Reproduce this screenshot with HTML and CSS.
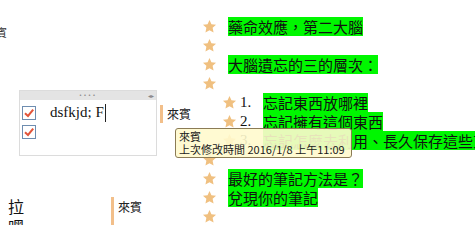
FILE: index.html
```html
<!DOCTYPE html>
<html>
<head>
<meta charset="utf-8">
<link rel="stylesheet" href="styles.css">
</head>
<body>
<div class="page">
  <div class="left">
    <div class="stub">賓</div>
    <div class="widget-row">
      <div class="widget">
        <div class="widget-head"><span class="dots">••••</span><span class="arrows">◂▸</span></div>
        <div class="widget-body">
          <div class="todo">
            <span class="cb"><svg viewBox="0 0 14 14" width="14" height="14"><path d="M3 7.2 L6 10 L11.2 3.6" fill="none" stroke="#e2553a" stroke-width="2"/></svg></span>
            <span class="todo-text">dsfkjd; F<span class="caret"></span></span>
          </div>
          <div class="todo">
            <span class="cb"><svg viewBox="0 0 14 14" width="14" height="14"><path d="M3 7.2 L6 10 L11.2 3.6" fill="none" stroke="#e2553a" stroke-width="2"/></svg></span>
          </div>
        </div>
      </div>
      <div class="author">來賓</div>
    </div>
    <div class="bottom-row">
      <div class="chars">拉<br>嘿</div>
      <div class="author author-low">來賓</div>
    </div>
  </div>
  <div class="right">
    <div class="row"><svg class="star" viewBox="0 0 24 24"><polygon points="12,1.5 15.1,8.3 22.5,9.1 17,14.1 18.5,21.5 12,17.8 5.5,21.5 7,14.1 1.5,9.1 8.9,8.3"/></svg><span class="hl">藥命效應，第二大腦</span></div>
    <div class="row"><svg class="star" viewBox="0 0 24 24"><polygon points="12,1.5 15.1,8.3 22.5,9.1 17,14.1 18.5,21.5 12,17.8 5.5,21.5 7,14.1 1.5,9.1 8.9,8.3"/></svg></div>
    <div class="row"><svg class="star" viewBox="0 0 24 24"><polygon points="12,1.5 15.1,8.3 22.5,9.1 17,14.1 18.5,21.5 12,17.8 5.5,21.5 7,14.1 1.5,9.1 8.9,8.3"/></svg><span class="hl">大腦遺忘的三的層次：</span></div>
    <div class="row"><svg class="star" viewBox="0 0 24 24"><polygon points="12,1.5 15.1,8.3 22.5,9.1 17,14.1 18.5,21.5 12,17.8 5.5,21.5 7,14.1 1.5,9.1 8.9,8.3"/></svg></div>
    <div class="row li"><svg class="star" viewBox="0 0 24 24"><polygon points="12,1.5 15.1,8.3 22.5,9.1 17,14.1 18.5,21.5 12,17.8 5.5,21.5 7,14.1 1.5,9.1 8.9,8.3"/></svg><span class="num">1.</span><span class="hl">忘記東西放哪裡</span></div>
    <div class="row li"><svg class="star" viewBox="0 0 24 24"><polygon points="12,1.5 15.1,8.3 22.5,9.1 17,14.1 18.5,21.5 12,17.8 5.5,21.5 7,14.1 1.5,9.1 8.9,8.3"/></svg><span class="num">2.</span><span class="hl">忘記擁有這個東西</span></div>
    <div class="row li"><svg class="star" viewBox="0 0 24 24"><polygon points="12,1.5 15.1,8.3 22.5,9.1 17,14.1 18.5,21.5 12,17.8 5.5,21.5 7,14.1 1.5,9.1 8.9,8.3"/></svg><span class="num">3.</span><span class="hl">忘記怎麼去利用、長久保存這些東西</span></div>
    <div class="row"><svg class="star" viewBox="0 0 24 24"><polygon points="12,1.5 15.1,8.3 22.5,9.1 17,14.1 18.5,21.5 12,17.8 5.5,21.5 7,14.1 1.5,9.1 8.9,8.3"/></svg></div>
    <div class="row"><svg class="star" viewBox="0 0 24 24"><polygon points="12,1.5 15.1,8.3 22.5,9.1 17,14.1 18.5,21.5 12,17.8 5.5,21.5 7,14.1 1.5,9.1 8.9,8.3"/></svg><span class="hl">最好的筆記方法是？</span></div>
    <div class="row"><svg class="star" viewBox="0 0 24 24"><polygon points="12,1.5 15.1,8.3 22.5,9.1 17,14.1 18.5,21.5 12,17.8 5.5,21.5 7,14.1 1.5,9.1 8.9,8.3"/></svg><span class="hl">兌現你的筆記</span></div>
    <div class="row"><svg class="star" viewBox="0 0 24 24"><polygon points="12,1.5 15.1,8.3 22.5,9.1 17,14.1 18.5,21.5 12,17.8 5.5,21.5 7,14.1 1.5,9.1 8.9,8.3"/></svg></div>
  </div>
  <div class="tooltip">
    <div>來賓</div>
    <div>上次修改時間 2016/1/8 上午11:09</div>
  </div>
</div>
</body>
</html>
```
FILE: styles.css
```css
html, body {
  margin: 0;
  padding: 0;
  background: #fff;
}
.page {
  position: relative;
  width: 475px;
  height: 225px;
  overflow: hidden;
  display: flex;
  font-family: "Noto Sans CJK TC", "Noto Sans", sans-serif;
  color: #1a1a1a;
}
.left {
  width: 200px;
  flex: none;
}
.stub {
  margin-top: 26px;
  margin-left: -4px;
  font-size: 11px;
  line-height: 12px;
  color: #333;
}
.widget-row {
  display: flex;
  align-items: flex-start;
  margin-top: 52px;
}
.widget {
  margin-left: 19px;
  width: 138px;
  height: 66px;
  box-sizing: border-box;
  border: 1px solid #dcdcdc;
  background: #fff;
}
.widget-head {
  height: 9px;
  background: #e4e4e4;
  display: flex;
  align-items: center;
  justify-content: center;
  position: relative;
}
.dots {
  font-size: 5px;
  letter-spacing: 1.5px;
  color: #777;
  line-height: 9px;
  font-family: "DejaVu Sans", sans-serif;
}
.arrows {
  position: absolute;
  right: 2px;
  top: 0;
  font-size: 6px;
  line-height: 9px;
  color: #888;
  font-family: "DejaVu Sans", sans-serif;
}
.widget-body {
  padding: 3px 0 0 2px;
}
.todo {
  display: flex;
  align-items: flex-start;
  height: 19px;
}
.cb {
  margin-top: 3px;
  width: 14px;
  height: 14px;
  box-sizing: border-box;
  border: 1px solid #6e8db0;
  background: #fff;
  flex: none;
  display: flex;
}
.cb svg {
  margin: -1px;
}
.todo-text {
  margin-left: 14px;
  font-family: "Liberation Serif", serif;
  font-size: 15px;
  line-height: 19px;
  color: #111;
  white-space: nowrap;
  display: flex;
  align-items: center;
}
.caret {
  display: inline-block;
  width: 1px;
  height: 18px;
  background: #222;
  margin-left: 1px;
}
.author {
  margin-left: 3px;
  margin-top: 15px;
  border-left: 3px solid #f2bf8a;
  padding-left: 4px;
  height: 18px;
  font-size: 12px;
  line-height: 18px;
  color: #222;
}
.bottom-row {
  display: flex;
  align-items: flex-start;
  margin-top: 40px;
}
.chars {
  margin-left: 8px;
  width: 103px;
  font-size: 16px;
  line-height: 20px;
  color: #111;
}
.author-low {
  margin-left: 0;
  margin-top: 1px;
  height: 40px;
  padding-top: 2px;
  line-height: 16px;
}
.right {
  flex: 1;
  min-width: 0;
  padding-top: 17px;
  overflow: hidden;
}
.row {
  display: flex;
  align-items: center;
  height: 19px;
  white-space: nowrap;
}
.star {
  width: 15px;
  height: 15px;
  margin-left: 2px;
  flex: none;
  fill: #f0c080;
}
.row .hl {
  margin-left: 11px;
}
.row.li .star {
  margin-left: 22px;
}
.num {
  margin-left: 3px;
  width: 23px;
  flex: none;
  font-family: "Liberation Serif", serif;
  font-size: 15px;
  line-height: 19px;
  color: #111;
}
.row.li .hl {
  margin-left: 0;
}
.hl {
  background: #00f700;
  font-size: 15px;
  line-height: 19px;
  color: #111;
  flex: none;
}
.tooltip {
  position: absolute;
  left: 175px;
  top: 128px;
  width: 177px;
  height: 30px;
  box-sizing: border-box;
  border: 1px solid #8b7b55;
  border-radius: 3px;
  background: rgba(255, 250, 205, 0.9);
  padding: 1px 0 0 3px;
  font-size: 11px;
  line-height: 13px;
  color: #1a1a1a;
  white-space: nowrap;
}
```
